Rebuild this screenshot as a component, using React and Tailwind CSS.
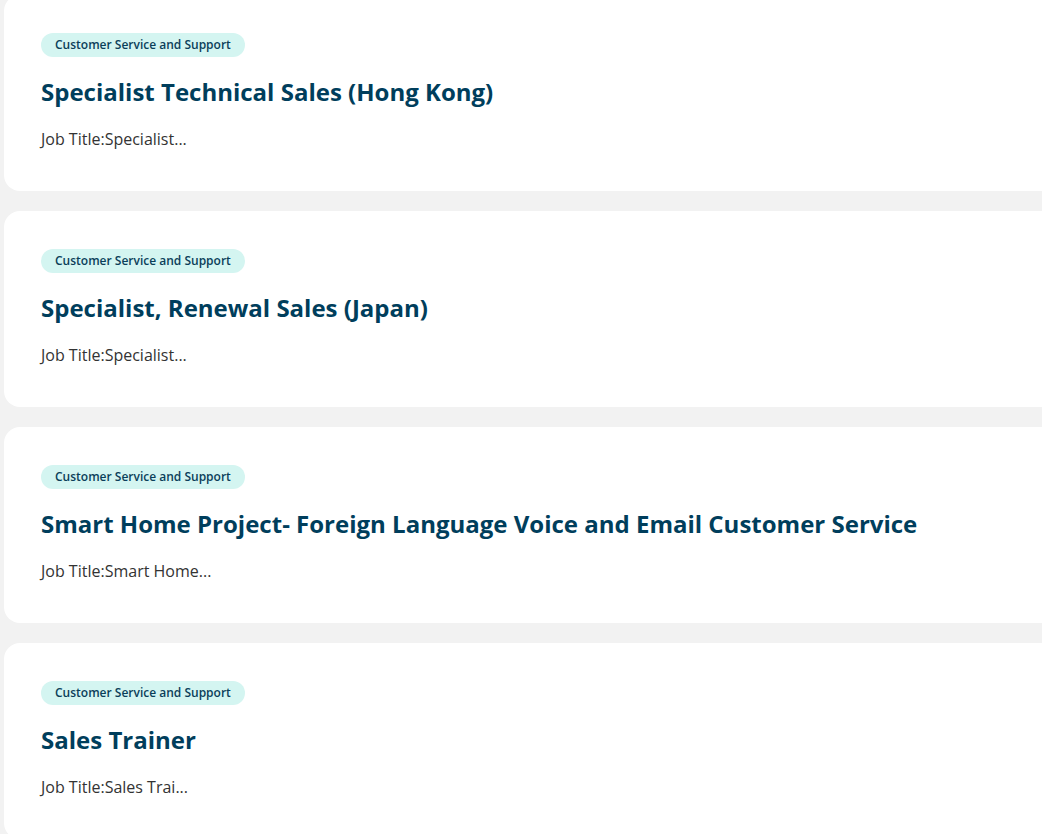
const jobs = [
  { title: 'Specialist Technical Sales (Hong Kong)', snippet: 'Job Title:Specialist...' },
  { title: 'Specialist, Renewal Sales (Japan)', snippet: 'Job Title:Specialist...' },
  { title: 'Smart Home Project- Foreign Language Voice and Email Customer Service', snippet: 'Job Title:Smart Home...' },
  { title: 'Sales Trainer', snippet: 'Job Title:Sales Trai...' },
];

function JobCard({ job }) {
  return (
    <div className="bg-white rounded-l-2xl pl-[37px] pt-[38px] pb-[40px] flex flex-col items-start">
      <span className="flex items-center h-6 px-[14px] rounded-full bg-[#d4f5f1] text-[#0b3f5a] text-[12px] leading-none font-semibold">
        Customer Service and Support
      </span>
      <h2 className="mt-[19px] text-[24px] leading-8 font-bold text-[#003e5c]">{job.title}</h2>
      <p className="mt-[19px] text-[16px] leading-6 text-[#333]">{job.snippet}</p>
    </div>
  );
}

export default function App() {
  return (
    <div className="min-h-screen bg-[#f2f2f2] pl-1 overflow-hidden" style={{ fontFamily: '"Open Sans", sans-serif' }}>
      <div className="-mt-[5px] flex flex-col gap-5">
        {jobs.map((job) => (
          <JobCard key={job.title} job={job} />
        ))}
      </div>
    </div>
  );
}
